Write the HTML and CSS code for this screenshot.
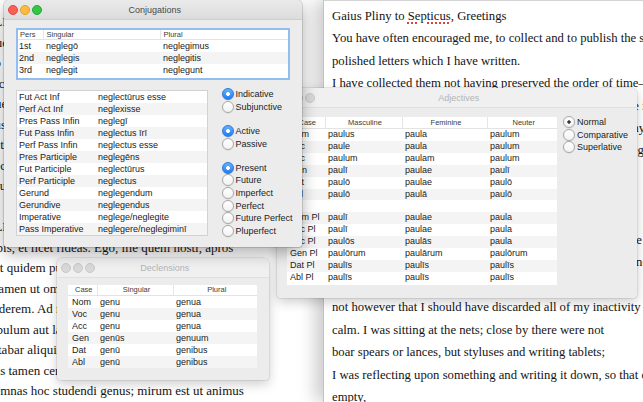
FILE: index.html
```html
<!DOCTYPE html>
<html lang="en">
<head>
<meta charset="utf-8">
<title>Latin</title>
<link rel="stylesheet" href="styles.css">
</head>
<body>
<div class="desk">
  <div class="doc doc-left">
    <div class="latin">
      <p>C. PLINIUS SEPTICIO SUO S.</p>
      <p>Frequenter hortatus es ut epistulas, si quas</p>
      <p>paulo curatius scripsissem, colligerem</p>
      <p>publicaremque. Collegi non servato temporis ordine</p>
      <p>(neque enim historiam componebam), sed ut quaeque in</p>
      <p>manus venerat. Superest ut nec te consilii nec me</p>
      <p>paeniteat obsequii. Ita enim fiet, ut eas quae adhuc</p>
      <p>neglectae iacent requiram et si quas addidero</p>
      <p>non supprimam. Vale.</p>
      <p>&nbsp;</p>
      <p>C. PLINIUS CORNELIO TACITO SUO S.</p>
      <p>Ridebis, et licet rideas. Ego, ille quem nosti, apros</p>
      <p>tres et quidem pulcherrimos cepi. 'Ipse?' inquis.</p>
      <p>non tamen ut omnino ab inertia mea et quiete</p>
      <p>discederem. Ad retia sedebam; erat in proximo non</p>
      <p>venabulum aut lancea, sed stilus et pugillares;</p>
      <p>meditabar aliquid enotabamque, ut si manus vacuas,</p>
      <p>plenas tamen ceras reportarem. Non est quod</p>
      <p>contemnas hoc studendi genus; mirum est ut animus</p>
    </div>
  </div>
  <div class="doc doc-right">
    <div class="english">
      <p>Gaius Pliny to <span class="spell">Septicus</span>, Greetings</p>
      <p>You have often encouraged me, to collect and to publish the somewhat more carefully</p>
      <p>polished letters which I have written.</p>
      <p>I have collected them not having preserved the order of time–</p>
      <p>for I was not composing a history–but just as each had come into my hands.</p>
      <p>It remains that neither you should regret your advice nor I my compliance, for</p>
      <p>so it will happen that I seek out those which until now lie neglected, and so</p>
      <p>that I shall not suppress any which I shall add. Farewell.</p>
      <p>&nbsp;</p>
      <p>Gaius Pliny to Cornelius Tacitus, Greetings</p>
      <p>You will laugh, and you may laugh. I, whom you know, have caught three boars, and very</p>
      <p>handsome ones at that. 'You yourself?' you say. Myself; but not so that I would</p>
      <p>give up my leisure and quiet entirely; but</p>
      <p>not however that I should have discarded all of my inactivity</p>
      <p>calm. I was sitting at the nets; close by there were not</p>
      <p>boar spears or lances, but styluses and writing tablets;</p>
      <p>I was reflecting upon something and writing it down, so that even if with</p>
      <p>empty,</p>
    </div>
  </div>

  <section class="win win-adj inactive">
    <header class="titlebar">
      <div class="lights"><i class="light"></i><i class="light"></i><i class="light"></i></div>
      <h1 class="title">Adjectives</h1>
      <div></div>
    </header>
    <div class="win-body adj-body">
      <div class="table-box">
        <table class="grid adj-grid">
          <colgroup><col class="w-acase"><col class="w-masc"><col class="w-fem"><col></colgroup>
          <thead><tr><th>Case</th><th>Masculine</th><th>Feminine</th><th>Neuter</th></tr></thead>
          <tbody>
            <tr><td>Nom</td><td>paulus</td><td>paula</td><td>paulum</td></tr>
            <tr><td>Voc</td><td>paule</td><td>paula</td><td>paulum</td></tr>
            <tr><td>Acc</td><td>paulum</td><td>paulam</td><td>paulum</td></tr>
            <tr><td>Gen</td><td>paulī</td><td>paulae</td><td>paulī</td></tr>
            <tr><td>Dat</td><td>paulō</td><td>paulae</td><td>paulō</td></tr>
            <tr><td>Abl</td><td>paulō</td><td>paulā</td><td>paulō</td></tr>
            <tr><td></td><td></td><td></td><td></td></tr>
            <tr><td>Nom Pl</td><td>paulī</td><td>paulae</td><td>paula</td></tr>
            <tr><td>Voc Pl</td><td>paulī</td><td>paulae</td><td>paula</td></tr>
            <tr><td>Acc Pl</td><td>paulōs</td><td>paulās</td><td>paula</td></tr>
            <tr><td>Gen Pl</td><td>paulōrum</td><td>paulārum</td><td>paulōrum</td></tr>
            <tr><td>Dat Pl</td><td>paulīs</td><td>paulīs</td><td>paulīs</td></tr>
            <tr><td>Abl Pl</td><td>paulīs</td><td>paulīs</td><td>paulīs</td></tr>
          </tbody>
        </table>
      </div>
      <div class="radios adj-radios">
        <div class="radio-group">
          <span class="radio on">Normal</span>
          <span class="radio">Comparative</span>
          <span class="radio">Superlative</span>
        </div>
      </div>
    </div>
  </section>

  <section class="win win-decl inactive">
    <header class="titlebar">
      <div class="lights"><i class="light"></i><i class="light"></i><i class="light"></i></div>
      <h1 class="title">Declensions</h1>
      <div></div>
    </header>
    <div class="win-body decl-body">
      <div class="table-box">
        <table class="grid decl-grid">
          <colgroup><col class="w-dcase"><col class="w-dsing"><col></colgroup>
          <thead><tr><th>Case</th><th>Singular</th><th>Plural</th></tr></thead>
          <tbody>
            <tr><td>Nom</td><td>genu</td><td>genua</td></tr>
            <tr><td>Voc</td><td>genu</td><td>genua</td></tr>
            <tr><td>Acc</td><td>genu</td><td>genua</td></tr>
            <tr><td>Gen</td><td>genūs</td><td>genuum</td></tr>
            <tr><td>Dat</td><td>genū</td><td>genibus</td></tr>
            <tr><td>Abl</td><td>genū</td><td>genibus</td></tr>
          </tbody>
        </table>
      </div>
    </div>
  </section>

  <section class="win win-conj active">
    <header class="titlebar">
      <div class="lights"><i class="light red"></i><i class="light yellow"></i><i class="light green"></i></div>
      <h1 class="title">Conjugations</h1>
      <div></div>
    </header>
    <div class="win-body conj-body">
      <div class="table-box focus">
        <table class="grid conj-persons">
          <colgroup><col class="w-pers"><col class="w-csing"><col></colgroup>
          <thead><tr><th>Pers</th><th>Singular</th><th>Plural</th></tr></thead>
          <tbody>
            <tr><td>1st</td><td>neglegō</td><td>neglegimus</td></tr>
            <tr><td>2nd</td><td>neglegis</td><td>neglegitis</td></tr>
            <tr><td>3rd</td><td>neglegit</td><td>neglegunt</td></tr>
          </tbody>
        </table>
      </div>
      <div class="conj-lower">
        <div class="table-box framed forms-box">
          <table class="grid forms-grid">
            <colgroup><col class="w-form"><col></colgroup>
            <tbody>
              <tr><td>Fut Act Inf</td><td>neglectūrus esse</td></tr>
              <tr><td>Perf Act Inf</td><td>neglexisse</td></tr>
              <tr><td>Pres Pass Infin</td><td>neglegī</td></tr>
              <tr><td>Fut Pass Infin</td><td>neglectus īrī</td></tr>
              <tr><td>Perf Pass Infin</td><td>neglectus esse</td></tr>
              <tr><td>Pres Participle</td><td>neglegēns</td></tr>
              <tr><td>Fut Participle</td><td>neglectūrus</td></tr>
              <tr><td>Perf Participle</td><td>neglectus</td></tr>
              <tr><td>Gerund</td><td>neglegendum</td></tr>
              <tr><td>Gerundive</td><td>neglegendus</td></tr>
              <tr><td>Imperative</td><td>neglege/neglegite</td></tr>
              <tr><td>Pass Imperative</td><td>neglegere/neglegiminī</td></tr>
            </tbody>
          </table>
        </div>
        <div class="radios conj-radios">
          <div class="radio-group">
            <span class="radio on">Indicative</span>
            <span class="radio">Subjunctive</span>
          </div>
          <div class="radio-group">
            <span class="radio on">Active</span>
            <span class="radio">Passive</span>
          </div>
          <div class="radio-group">
            <span class="radio on">Present</span>
            <span class="radio">Future</span>
            <span class="radio">Imperfect</span>
            <span class="radio">Perfect</span>
            <span class="radio">Future Perfect</span>
            <span class="radio">Pluperfect</span>
          </div>
        </div>
      </div>
    </div>
  </section>
</div>
</body>
</html>
```

FILE: styles.css
```css
* { box-sizing: border-box; margin: 0; padding: 0; }

html, body {
  width: 643px;
  height: 402px;
  overflow: hidden;
  background: #fff;
}

body {
  font-family: "Liberation Sans", Arial, sans-serif;
}

.desk {
  position: relative;
  width: 643px;
  height: 402px;
  display: flex;
  overflow: hidden;
}

/* ---------- background documents ---------- */
.doc {
  background: #fff;
  overflow: hidden;
  font-family: "Liberation Serif", "Times New Roman", serif;
  color: #141414;
  white-space: nowrap;
}

.doc-left {
  width: 323px;
  flex: none;
}

.latin {
  font-size: 13px;
  line-height: 20.5px;
  padding-top: 12.25px;
  margin-left: -28px;
}

.doc-right {
  flex: 1;
  position: relative;
  z-index: 1;
  border-left: 1px solid #c2c2c2;
  border-top: 1px solid #d4d4d4;
  box-shadow: -8px 0 16px rgba(0, 0, 0, 0.2);
}

.english {
  font-size: 12.7px;
  line-height: 22.4px;
  padding: 4px 0 0 8px;
}

.spell {
  text-decoration: underline dotted #e0413a;
  text-decoration-thickness: 1.5px;
  text-underline-offset: 2px;
}

/* ---------- windows ---------- */
.win {
  position: absolute;
  display: flex;
  flex-direction: column;
  background: #ececec;
  border-radius: 5px 5px 3px 3px;
  overflow: hidden;
}

.win.active {
  box-shadow: 0 6px 16px rgba(0, 0, 0, 0.32), 0 0 0 0.5px rgba(0, 0, 0, 0.25);
}

.win.inactive {
  box-shadow: 0 4px 12px rgba(0, 0, 0, 0.2), 0 0 0 0.5px rgba(0, 0, 0, 0.14);
}

.win-conj { left: 4px; top: 0; width: 298px; height: 247px; z-index: 4; }
.win-adj { left: 277px; top: 88px; width: 360px; height: 210px; z-index: 2; }
.win-decl { left: 57px; top: 258px; width: 212px; height: 122px; z-index: 3; }

.titlebar {
  height: 20px;
  flex: none;
  display: grid;
  grid-template-columns: 1fr auto 1fr;
  align-items: center;
  padding-left: 3.5px;
  border-bottom: 1px solid #d2d2d2;
}

.active .titlebar {
  background: linear-gradient(#eaeaea, #dcdcdc);
  border-bottom-color: #cdcdcd;
}

.inactive .titlebar {
  background: #f0f0f0;
  border-bottom-color: #e0e0e0;
}

.title {
  font-size: 9px;
  font-weight: normal;
  line-height: 20px;
  color: #4a4a4a;
}

.inactive .title { color: #b4b4b4; }

.lights {
  display: flex;
  gap: 2.4px;
}

.light {
  width: 10px;
  height: 10px;
  border-radius: 50%;
  background: #d9d9d9;
  border: 0.5px solid #c8c8c8;
}

.light.red { background: #fc5f58; border-color: #df4640; }
.light.yellow { background: #fdbc3f; border-color: #dea12a; }
.light.green { background: #33c748; border-color: #22a834; }

.win-body {
  display: flex;
}

/* ---------- tables ---------- */
.table-box {
  background: #fff;
  flex: none;
}

.table-box.focus {
  border: 2px solid #93bcef;
  height: 52px;
  width: 274px;
}

.table-box.framed {
  border: 1px solid #d2d2d2;
}

.grid {
  width: 100%;
  border-collapse: collapse;
  table-layout: fixed;
  font-size: 9px;
  color: #222;
}

.grid td {
  height: 12px;
  line-height: 12px;
  padding: 0 0 0 3px;
  white-space: nowrap;
}

.grid th {
  font-weight: normal;
  font-size: 7.5px;
  color: #3c3c3c;
  height: 11px;
  line-height: 11px;
  padding: 0 0 0 3px;
  text-align: center;
  white-space: nowrap;
  border-bottom: 1px solid #e3e3e3;
}

.grid th + th { border-left: 1px solid #e6e6e6; }

.grid tbody tr:nth-child(even) td { background: #f4f4f4; }

/* conjugations */
.conj-body {
  flex-direction: column;
  padding: 8px 12px 0 12px;
}

.conj-persons th {
  text-align: left;
  height: 9px;
  line-height: 9px;
  padding-left: 2px;
}

.conj-persons th + th { padding-left: 3px; }
.conj-persons td:first-child { padding-left: 1px; }

.w-pers { width: 25px; }
.w-csing { width: 117px; }

.conj-lower {
  display: flex;
  margin-top: 10px;
}

.forms-box {
  width: 192px;
  height: 146px;
}

.w-form { width: 78px; }

.forms-grid td:first-child { padding-left: 2px; }

.radios {
  display: flex;
  flex-direction: column;
  font-size: 9px;
  color: #222;
}

.conj-radios {
  margin-left: 14px;
  margin-top: -2px;
  gap: 11.3px;
}

.radio-group {
  display: flex;
  flex-direction: column;
}

.radio {
  display: flex;
  align-items: center;
  gap: 1.5px;
  height: 12.7px;
  white-space: nowrap;
}

.radio::before {
  content: "";
  flex: none;
  width: 10px;
  height: 10px;
  border-radius: 50%;
  background: linear-gradient(#ffffff, #f2f2f2);
  border: 0.5px solid #a9a9a9;
  box-shadow: 0 0.5px 1px rgba(0, 0, 0, 0.12);
}

.active .radio.on::before {
  background: radial-gradient(circle, #fff 0 1.7px, transparent 2.2px), linear-gradient(#68b0fa, #1b7ff5);
  border-color: #2b79dd;
}

.inactive .radio.on::before {
  background: radial-gradient(circle, #333 0 1.4px, transparent 1.9px), linear-gradient(#ffffff, #f2f2f2);
}

/* adjectives */
.adj-body {
  padding: 9px 0 0 10px;
}

.adj-body .table-box {
  width: 270px;
  height: 168px;
}

.adj-grid th { height: 11px; line-height: 11px; }
.adj-grid td { height: 11.9px; line-height: 11.9px; }

.w-acase { width: 38px; }
.w-masc { width: 77px; }
.w-fem { width: 85px; }

.adj-radios {
  margin-left: 6px;
  margin-top: -1px;
}

.adj-radios .radio { height: 12.5px; gap: 2px; }

/* declensions */
.decl-body {
  padding: 7px 0 0 11px;
}

.decl-body .table-box {
  width: 189px;
}

.decl-grid th { height: 10px; line-height: 10px; }

.w-dcase { width: 29px; }
.w-dsing { width: 76px; }

.decl-grid td:first-child { padding-left: 4px; }
```
